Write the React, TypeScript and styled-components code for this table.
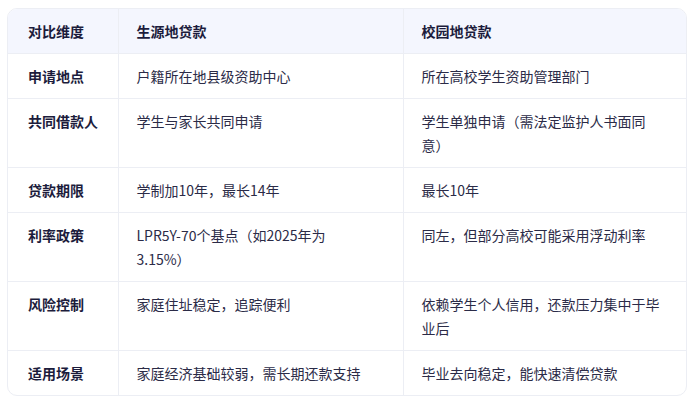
import styled, { createGlobalStyle } from "styled-components";

interface RowData {
  label: string;
  local: string;
  campus: string;
}

const rows: RowData[] = [
  { label: "申请地点", local: "户籍所在地县级资助中心", campus: "所在高校学生资助管理部门" },
  { label: "共同借款人", local: "学生与家长共同申请", campus: "学生单独申请（需法定监护人书面同意）" },
  { label: "贷款期限", local: "学制加10年，最长14年", campus: "最长10年" },
  { label: "利率政策", local: "LPR5Y-70个基点（如2025年为3.15%）", campus: "同左，但部分高校可能采用浮动利率" },
  { label: "风险控制", local: "家庭住址稳定，追踪便利", campus: "依赖学生个人信用，还款压力集中于毕业后" },
  { label: "适用场景", local: "家庭经济基础较弱，需长期还款支持", campus: "毕业去向稳定，能快速清偿贷款" },
];

const GlobalStyle = createGlobalStyle`
  body {
    margin: 0;
    background: #ffffff;
    font-family: "Noto Sans CJK SC", "Noto Sans", sans-serif;
  }
`;

const Page = styled.div`
  padding: 8px 7px;
`;

const Frame = styled.div`
  border: 1px solid #eceef4;
  border-radius: 10px;
  overflow: hidden;
`;

const Table = styled.table`
  width: 100%;
  border-collapse: collapse;
  table-layout: fixed;
  font-size: 14px;
  line-height: 24px;
  color: #2b2b47;

  tr + tr td,
  tbody tr:first-child td {
    border-top: 1px solid #eceef4;
  }
`;

const HeadCell = styled.th`
  background: #f4f6fe;
  padding: 10px 20px 10px 18px;
  text-align: left;
  font-weight: 700;
  color: #1c1c3c;
  &:first-child {
    padding: 10px 6px 10px 20px;
  }
  & + & {
    border-left: 1px solid #eceef4;
  }
`;

const Cell = styled.td<{ $strong?: boolean; $tight?: boolean }>`
  padding: 10px ${(p) => (p.$strong ? "6px" : p.$tight ? "38px" : "20px")} 10px
    ${(p) => (p.$strong ? "20px" : "18px")};
  vertical-align: top;
  font-weight: ${(p) => (p.$strong ? 700 : 400)};
  color: ${(p) => (p.$strong ? "#1c1c3c" : "#2b2b47")};
  & + & {
    border-left: 1px solid #eceef4;
  }
`;

export default function App() {
  return (
    <>
      <GlobalStyle />
      <Page>
        <Frame>
          <Table>
            <colgroup>
              <col style={{ width: 110 }} />
              <col style={{ width: 285 }} />
              <col />
            </colgroup>
            <thead>
              <tr>
                <HeadCell>对比维度</HeadCell>
                <HeadCell>生源地贷款</HeadCell>
                <HeadCell>校园地贷款</HeadCell>
              </tr>
            </thead>
            <tbody>
              {rows.map((r) => (
                <tr key={r.label}>
                  <Cell $strong>{r.label}</Cell>
                  <Cell $tight>{r.local}</Cell>
                  <Cell>{r.campus}</Cell>
                </tr>
              ))}
            </tbody>
          </Table>
        </Frame>
      </Page>
    </>
  );
}
